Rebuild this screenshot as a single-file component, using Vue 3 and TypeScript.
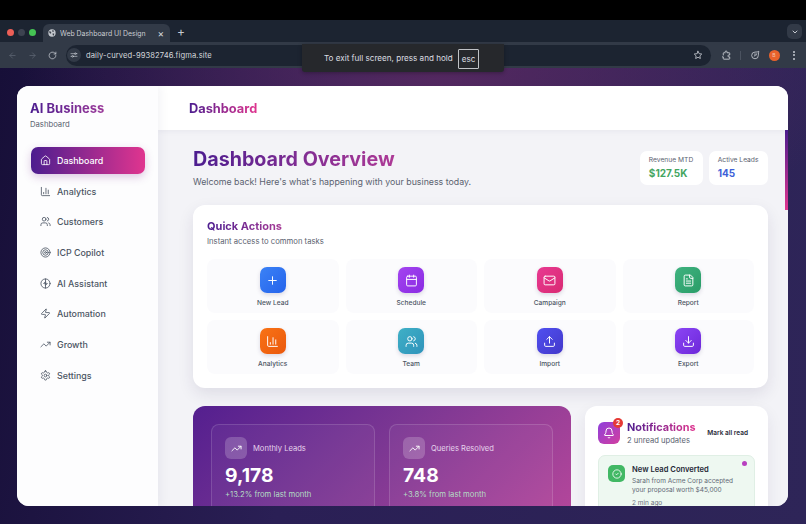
<template>
  <div class="screen">
    <div class="topblack"></div>

    <div class="tabstrip">
      <div class="lights">
        <span class="light red"></span>
        <span class="light grey"></span>
        <span class="light green"></span>
      </div>
      <div class="tab">
        <svg class="globe" viewBox="0 0 24 24"><circle cx="12" cy="12" r="11" fill="#c4c8ce" /><path d="M4 6l5 2 1 4-3 2-3-3zM13 3l5 2-2 4-3-1zM14 13l5 1-2 6-3-2z" fill="#3a404b" /></svg>
        <span class="tab-title">Web Dashboard UI Design</span>
        <span class="tab-close">×</span>
      </div>
      <span class="tab-plus">+</span>
      <span class="spacer"></span>
      <div class="tab-menu">
        <svg viewBox="0 0 24 24" class="ic"><path d="m6 9 6 6 6-6" /></svg>
      </div>
    </div>

    <div class="toolbar">
      <svg viewBox="0 0 24 24" class="ic tool dim"><path d="M19 12H5M12 19l-7-7 7-7" /></svg>
      <svg viewBox="0 0 24 24" class="ic tool dim"><path d="M5 12h14M12 5l7 7-7 7" /></svg>
      <svg viewBox="0 0 24 24" class="ic tool"><path d="M21 12a9 9 0 1 1-3-6.7L21 8" /><path d="M21 3v5h-5" /></svg>
      <div class="omnibox">
        <span class="site-btn">
          <svg viewBox="0 0 24 24" class="ic"><path d="M3 8h10M19 8h2M3 16h2M11 16h10" /><circle cx="16" cy="8" r="2.5" /><circle cx="8" cy="16" r="2.5" /></svg>
        </span>
        <span class="url">daily-curved-99382746.figma.site</span>
        <span class="spacer"></span>
        <svg viewBox="0 0 24 24" class="ic star"><path d="m12 3 2.8 5.8 6.2.9-4.5 4.4 1.1 6.3-5.6-3-5.6 3 1.1-6.3L3 9.7l6.2-.9z" /></svg>
      </div>
      <svg viewBox="0 0 24 24" class="ic ext"><path d="M9 4a2 2 0 0 1 4 0v2h5a1 1 0 0 1 1 1v4h-2a2 2 0 0 0 0 4h2v4a1 1 0 0 1-1 1H6a1 1 0 0 1-1-1v-4H3" /><path d="M5 11V7a1 1 0 0 1 1-1h3" /></svg>
      <span class="tool-sep"></span>
      <svg viewBox="0 0 24 24" class="ic ext2"><path d="M21 4c0 0-1 1-9 1a8 8 0 1 0 8 8c0-4 1-9 1-9z" /><path d="M12 9v4l-2 2M16 9l-2 4" /></svg>
      <span class="avatar">B</span>
      <span class="kebab"><i></i><i></i><i></i></span>
    </div>

    <div class="fs-toast">
      To exit full screen, press and hold <span class="esc">esc</span>
    </div>

    <div class="stage">
      <div class="window">
        <aside class="sidebar">
          <div class="brand">
            <div class="brand-name grad">AI Business</div>
            <div class="brand-sub">Dashboard</div>
          </div>
          <nav class="nav">
            <a v-for="item in navItems" :key="item.label" class="nav-item" :class="{ active: item.active }">
              <svg viewBox="0 0 24 24" class="ic nav-ic" v-html="item.icon"></svg>
              <span>{{ item.label }}</span>
            </a>
          </nav>
        </aside>

        <div class="main">
          <header class="header">
            <span class="header-title grad">Dashboard</span>
          </header>

          <div class="content">
            <div class="scrollthumb"></div>

            <section class="overview">
              <div>
                <h1 class="grad">Dashboard Overview</h1>
                <p>Welcome back! Here's what's happening with your business today.</p>
              </div>
              <div class="mini-stats">
                <div class="mini">
                  <div class="mini-label">Revenue MTD</div>
                  <div class="mini-value money">$127.5K</div>
                </div>
                <div class="mini">
                  <div class="mini-label">Active Leads</div>
                  <div class="mini-value leads">145</div>
                </div>
              </div>
            </section>

            <section class="quick">
              <h2 class="grad">Quick Actions</h2>
              <p class="quick-sub">Instant access to common tasks</p>
              <div class="quick-grid">
                <div v-for="a in actions" :key="a.label" class="action">
                  <span class="action-ic" :style="{ background: a.bg }">
                    <svg viewBox="0 0 24 24" class="ic" v-html="a.icon"></svg>
                  </span>
                  <span class="action-label">{{ a.label }}</span>
                </div>
              </div>
            </section>

            <section class="bottom">
              <div class="metrics">
                <div v-for="m in metrics" :key="m.label" class="metric">
                  <div class="metric-head">
                    <span class="metric-ic">
                      <svg viewBox="0 0 24 24" class="ic" v-html="trendIcon"></svg>
                    </span>
                    <span class="metric-label">{{ m.label }}</span>
                  </div>
                  <div class="metric-value">{{ m.value }}</div>
                  <div class="metric-delta">{{ m.delta }}</div>
                </div>
              </div>

              <div class="notifs">
                <div class="notifs-head">
                  <span class="bell">
                    <svg viewBox="0 0 24 24" class="ic"><path d="M10.3 21a1.9 1.9 0 0 0 3.4 0" /><path d="M3.3 15.3A1 1 0 0 0 4 17h16a1 1 0 0 0 .7-1.7C19.4 14 18 12.5 18 8A6 6 0 0 0 6 8c0 4.5-1.4 6-2.7 7.3" /></svg>
                    <span class="bell-badge">2</span>
                  </span>
                  <div class="notifs-titles">
                    <div class="notifs-title grad">Notifications</div>
                    <div class="notifs-sub">2 unread updates</div>
                  </div>
                  <span class="mark">Mark all read</span>
                </div>
                <div class="notif">
                  <span class="notif-ic">
                    <svg viewBox="0 0 24 24" class="ic"><circle cx="12" cy="12" r="10" /><path d="m9 12 2 2 4-4" /></svg>
                  </span>
                  <div class="notif-body">
                    <div class="notif-title">New Lead Converted</div>
                    <div class="notif-text">Sarah from Acme Corp accepted your proposal worth $45,000</div>
                    <div class="notif-time">2 min ago</div>
                  </div>
                  <span class="notif-dot"></span>
                </div>
              </div>
            </section>
          </div>
        </div>
      </div>
    </div>
  </div>
</template>

<script setup lang="ts">
interface NavItem {
  label: string
  icon: string
  active?: boolean
}

interface Action {
  label: string
  bg: string
  icon: string
}

const trendIcon = '<path d="M22 7 13.5 15.5 8.5 10.5 2 17" /><path d="M16 7h6v6" />'

const barsIcon = '<path d="M3 3v16a2 2 0 0 0 2 2h16" /><path d="M18 17V9" /><path d="M13 17V5" /><path d="M8 17v-3" />'
const usersIcon = '<path d="M16 21v-2a4 4 0 0 0-4-4H6a4 4 0 0 0-4 4v2" /><circle cx="9" cy="7" r="4" /><path d="M22 21v-2a4 4 0 0 0-3-3.87" /><path d="M16 3.13a4 4 0 0 1 0 7.75" />'

const navItems: NavItem[] = [
  {
    label: 'Dashboard',
    active: true,
    icon: '<path d="M15 21v-8a1 1 0 0 0-1-1h-4a1 1 0 0 0-1 1v8" /><path d="M3 10a2 2 0 0 1 .709-1.528l7-5.999a2 2 0 0 1 2.582 0l7 5.999A2 2 0 0 1 21 10v9a2 2 0 0 1-2 2H5a2 2 0 0 1-2-2z" />',
  },
  { label: 'Analytics', icon: barsIcon },
  { label: 'Customers', icon: usersIcon },
  {
    label: 'ICP Copilot',
    icon: '<circle cx="12" cy="12" r="10" /><circle cx="12" cy="12" r="6" /><circle cx="12" cy="12" r="2" />',
  },
  {
    label: 'AI Assistant',
    icon: '<circle cx="12" cy="12" r="10" /><path d="M12 2v20" /><path d="M12 8 8 12l4 1" /><path d="m12 11 4 1-4 4" />',
  },
  {
    label: 'Automation',
    icon: '<path d="M4 14a1 1 0 0 1-.78-1.63l9.9-10.2a.5.5 0 0 1 .86.46l-1.92 6.02A1 1 0 0 0 13 10h7a1 1 0 0 1 .78 1.63l-9.9 10.2a.5.5 0 0 1-.86-.46l1.92-6.02A1 1 0 0 0 11 14z" />',
  },
  { label: 'Growth', icon: trendIcon },
  {
    label: 'Settings',
    icon: '<path d="M12.22 2h-.44a2 2 0 0 0-2 2v.18a2 2 0 0 1-1 1.73l-.43.25a2 2 0 0 1-2 0l-.15-.08a2 2 0 0 0-2.73.73l-.22.38a2 2 0 0 0 .73 2.73l.15.1a2 2 0 0 1 1 1.72v.51a2 2 0 0 1-1 1.74l-.15.09a2 2 0 0 0-.73 2.73l.22.38a2 2 0 0 0 2.73.73l.15-.08a2 2 0 0 1 2 0l.43.25a2 2 0 0 1 1 1.73V20a2 2 0 0 0 2 2h.44a2 2 0 0 0 2-2v-.18a2 2 0 0 1 1-1.73l.43-.25a2 2 0 0 1 2 0l.15.08a2 2 0 0 0 2.73-.73l.22-.39a2 2 0 0 0-.73-2.73l-.15-.08a2 2 0 0 1-1-1.74v-.5a2 2 0 0 1 1-1.74l.15-.09a2 2 0 0 0 .73-2.73l-.22-.38a2 2 0 0 0-2.73-.73l-.15.08a2 2 0 0 1-2 0l-.43-.25a2 2 0 0 1-1-1.73V4a2 2 0 0 0-2-2z" /><circle cx="12" cy="12" r="3" />',
  },
]

const actions: Action[] = [
  {
    label: 'New Lead',
    bg: 'linear-gradient(135deg, #3b82f6, #2563eb)',
    icon: '<path d="M5 12h14" /><path d="M12 5v14" />',
  },
  {
    label: 'Schedule',
    bg: 'linear-gradient(135deg, #a344f0, #8a2be2)',
    icon: '<path d="M8 2v4" /><path d="M16 2v4" /><rect width="18" height="18" x="3" y="4" rx="2" /><path d="M3 10h18" />',
  },
  {
    label: 'Campaign',
    bg: 'linear-gradient(135deg, #e83a92, #d92a72)',
    icon: '<rect width="20" height="16" x="2" y="4" rx="2" /><path d="m22 7-8.97 5.7a1.94 1.94 0 0 1-2.06 0L2 7" />',
  },
  {
    label: 'Report',
    bg: 'linear-gradient(135deg, #3fb27f, #2a9d68)',
    icon: '<path d="M15 2H6a2 2 0 0 0-2 2v16a2 2 0 0 0 2 2h12a2 2 0 0 0 2-2V7Z" /><path d="M14 2v4a2 2 0 0 0 2 2h4" /><path d="M16 13H8" /><path d="M16 17H8" /><path d="M10 9H8" />',
  },
  {
    label: 'Analytics',
    bg: 'linear-gradient(135deg, #f97316, #ea580c)',
    icon: barsIcon,
  },
  {
    label: 'Team',
    bg: 'linear-gradient(135deg, #3fb0c6, #2f93bb)',
    icon: usersIcon,
  },
  {
    label: 'Import',
    bg: 'linear-gradient(135deg, #5050f0, #4338ca)',
    icon: '<path d="M12 3v12" /><path d="m17 8-5-5-5 5" /><path d="M21 15v4a2 2 0 0 1-2 2H5a2 2 0 0 1-2-2v-4" />',
  },
  {
    label: 'Export',
    bg: 'linear-gradient(135deg, #8b45f5, #6d28d9)',
    icon: '<path d="M12 15V3" /><path d="m7 10 5 5 5-5" /><path d="M21 15v4a2 2 0 0 1-2 2H5a2 2 0 0 1-2-2v-4" />',
  },
]

const metrics = [
  { label: 'Monthly Leads', value: '9,178', delta: '+13.2% from last month' },
  { label: 'Queries Resolved', value: '748', delta: '+3.8% from last month' },
]
</script>

<style>
html,
body {
  margin: 0;
  background: #000;
}
</style>

<style scoped>
* {
  box-sizing: border-box;
}

.screen {
  position: relative;
  width: 806px;
  height: 524px;
  display: flex;
  flex-direction: column;
  overflow: hidden;
  font-family: Inter, 'Liberation Sans', sans-serif;
  background: #000;
}

.ic {
  display: block;
  fill: none;
  stroke: currentColor;
  stroke-width: 2;
  stroke-linecap: round;
  stroke-linejoin: round;
}

.grad {
  display: inline-block;
  background: linear-gradient(90deg, #4c1d8f, #e0358f);
  -webkit-background-clip: text;
  background-clip: text;
  color: transparent;
}

.spacer {
  flex: 1;
}

.topblack {
  height: 20px;
  flex: none;
  background: #000;
}

.tabstrip {
  height: 22px;
  flex: none;
  display: flex;
  align-items: flex-end;
  background: #1c2431;
  color: #c6cad1;
}

.lights {
  display: flex;
  gap: 4px;
  padding: 0 7px 6px 7px;
}

.light {
  width: 7px;
  height: 7px;
  border-radius: 50%;
}

.light.red {
  background: #ec5f57;
}

.light.grey {
  background: #3d4350;
}

.light.green {
  background: #45c354;
}

.tab {
  width: 127px;
  height: 18px;
  display: flex;
  align-items: center;
  padding: 0 6px 0 5px;
  background: #323a47;
  border-radius: 6px 6px 0 0;
}

.globe {
  width: 8px;
  height: 8px;
  margin-right: 4px;
}

.tab-title {
  flex: 1;
  font-size: 6.9px;
  color: #c9ccd2;
  white-space: nowrap;
}

.tab-close {
  font-size: 10px;
  line-height: 1;
  color: #d8dade;
}

.tab-plus {
  width: 22px;
  height: 19px;
  text-align: center;
  font-size: 12px;
  line-height: 18px;
  color: #c6cad1;
}

.tab-menu {
  width: 15px;
  height: 15px;
  margin: 0 4px 3px 0;
  border-radius: 5px;
  background: #323a47;
  display: flex;
  align-items: center;
  justify-content: center;
}

.tab-menu .ic {
  width: 8px;
  height: 8px;
  stroke-width: 3;
}

.toolbar {
  height: 26px;
  flex: none;
  display: flex;
  align-items: center;
  padding: 0 11px 0 8px;
  background: #323a47;
  color: #c6cad1;
}

.tool {
  width: 9px;
  height: 9px;
  flex: none;
  margin-right: 11px;
}

.tool.dim {
  color: #5d6573;
}

.omnibox {
  flex: 1;
  height: 21px;
  margin-left: -2px;
  display: flex;
  align-items: center;
  padding: 0 8px 0 1px;
  background: #1c2431;
  border-radius: 11px;
}

.site-btn {
  width: 14px;
  height: 14px;
  border-radius: 50%;
  background: #323a47;
  display: flex;
  align-items: center;
  justify-content: center;
}

.site-btn .ic {
  width: 8px;
  height: 8px;
}

.url {
  margin-left: 5px;
  font-size: 7.6px;
  color: #d4d7dc;
  letter-spacing: 0.1px;
}

.star {
  width: 10px;
  height: 10px;
}

.ext {
  width: 11px;
  height: 11px;
  margin-left: 10px;
}

.tool-sep {
  width: 1px;
  height: 9px;
  margin-left: 8px;
  background: #4b5360;
}

.ext2 {
  width: 10px;
  height: 10px;
  margin-left: 9px;
}

.avatar {
  width: 11px;
  height: 11px;
  margin-left: 9px;
  border-radius: 50%;
  background: #e8622c;
  color: #f7c4ab;
  font-size: 5px;
  line-height: 11px;
  text-align: center;
}

.kebab {
  display: flex;
  flex-direction: column;
  gap: 1.5px;
  margin-left: 13.5px;
}

.kebab i {
  display: block;
  width: 2px;
  height: 2px;
  border-radius: 50%;
  background: #c6cad1;
}

.fs-toast {
  position: absolute;
  left: 302px;
  top: 44px;
  width: 202px;
  height: 28px;
  display: flex;
  align-items: center;
  padding-left: 22px;
  gap: 5px;
  background: #26282c;
  border-radius: 0 0 3px 3px;
  font-size: 8.1px;
  color: #dcdde0;
  box-shadow: 0 1px 4px rgba(0, 0, 0, 0.3);
}

.esc {
  display: inline-block;
  padding: 3px;
  margin-top: 1px;
  border: 1px solid #c0c2c6;
  border-radius: 1px;
  line-height: 12px;
}

.stage {
  flex: 1;
  min-height: 0;
  padding: 18px 18px 18px 17px;
  background:
    radial-gradient(ellipse 420px 190px at 440px 0, rgba(92, 42, 98, 0.85), rgba(92, 42, 98, 0) 100%),
    linear-gradient(100deg, #170f38 0%, #2a1f55 40%, #2e2558 100%);
}

.window {
  height: 100%;
  display: flex;
  background: #fff;
  border-radius: 12px;
  overflow: hidden;
}

.sidebar {
  width: 141px;
  flex: none;
  padding: 14px 13px 0 14px;
  background: #fdfdfe;
  box-shadow: 2px 0 10px rgba(40, 30, 80, 0.06);
  position: relative;
  z-index: 2;
}

.brand {
  height: 47px;
}

.brand-name {
  display: block;
  width: max-content;
  margin-left: -1px;
  font-size: 13px;
  font-weight: 700;
  line-height: 17px;
  background-image: linear-gradient(90deg, #4c1d8f, #9b3a9a);
}

.brand-sub {
  margin: 2px 0 0 -1px;
  font-size: 7.7px;
  line-height: 11px;
  color: #5b6270;
}

.nav {
  display: flex;
  flex-direction: column;
  gap: 4px;
}

.nav-item {
  height: 26.7px;
  display: flex;
  align-items: center;
  gap: 6px;
  padding-left: 9px;
  border-radius: 7px;
  font-size: 8.9px;
  font-weight: 500;
  color: #4b5563;
}

.nav-item.active {
  color: #fff;
  background: linear-gradient(90deg, #4c1d8f, #e0358f);
  box-shadow: 0 3px 8px rgba(120, 40, 140, 0.25);
}

.nav-ic {
  width: 11px;
  height: 11px;
  flex: none;
  stroke-width: 1.8;
}

.main {
  flex: 1;
  min-width: 0;
  display: flex;
  flex-direction: column;
}

.header {
  height: 44px;
  flex: none;
  display: flex;
  align-items: center;
  padding: 1px 0 0 31px;
  background: #fff;
  box-shadow: 0 1px 6px rgba(40, 30, 80, 0.06);
  position: relative;
  z-index: 1;
}

.header-title {
  font-size: 12.8px;
  font-weight: 700;
  line-height: 18px;
}

.content {
  position: relative;
  flex: 1;
  min-height: 0;
  overflow: hidden;
  padding: 16px 20px 0 35px;
  background: #f3f3f7;
}

.scrollthumb {
  position: absolute;
  right: 0;
  top: 0;
  width: 3px;
  height: 80px;
  background: linear-gradient(180deg, #4c1d8f, #e0358f);
}

.overview {
  display: flex;
  justify-content: space-between;
  height: 59px;
}

.overview h1 {
  margin: 0;
  font-size: 19.7px;
  font-weight: 700;
  line-height: 26px;
  background-image: linear-gradient(90deg, #4c1d8f, #ad3a96);
}

.overview p {
  margin: 3px 0 0;
  font-size: 8.8px;
  line-height: 14px;
  color: #5b6270;
}

.mini-stats {
  display: flex;
  gap: 6px;
  margin-top: 5px;
}

.mini {
  height: 34px;
  padding: 5px 9.5px 0 9px;
  background: #fff;
  border-radius: 7px;
}

.mini-label {
  font-size: 6.7px;
  line-height: 9px;
  color: #5b6270;
}

.mini-value {
  margin-top: 2px;
  font-size: 10px;
  font-weight: 700;
  line-height: 13px;
}

.money {
  color: #43a55f;
}

.leads {
  color: #3d5fd8;
}

.quick {
  height: 183px;
  padding: 9px 14px 0;
  background: #fff;
  border-radius: 12px;
  box-shadow: 0 6px 16px rgba(40, 30, 80, 0.1);
}

.quick h2 {
  margin: 0;
  font-size: 11px;
  font-weight: 700;
  line-height: 15px;
  background-image: linear-gradient(90deg, #4c1d8f, #a63a96);
}

.quick-sub {
  margin: 2px 0 0;
  font-size: 7.7px;
  line-height: 11px;
  color: #5b6270;
}

.quick-grid {
  margin-top: 12px;
  display: grid;
  grid-template-columns: repeat(4, 1fr);
  grid-auto-rows: 54px;
  gap: 7px;
}

.action {
  display: flex;
  flex-direction: column;
  align-items: center;
  padding-top: 8px;
  background: #fbfbfd;
  border-radius: 8px;
}

.action-ic {
  width: 26px;
  height: 26px;
  border-radius: 7px;
  display: flex;
  align-items: center;
  justify-content: center;
  color: #fff;
  box-shadow: 0 2px 4px rgba(40, 30, 80, 0.15);
}

.action-ic .ic {
  width: 13px;
  height: 13px;
  stroke-width: 1.8;
}

.action-label {
  margin-top: 6px;
  font-size: 6.6px;
  font-weight: 500;
  line-height: 9px;
  color: #4b5563;
}

.bottom {
  margin-top: 18px;
  display: flex;
  gap: 14px;
  height: 200px;
}

.metrics {
  width: 378px;
  flex: none;
  display: flex;
  gap: 14px;
  padding: 18px;
  background: linear-gradient(135deg, #541f8f 0%, #7c3793 40%, #b5479b 85%);
  border-radius: 12px;
}

.metric {
  flex: 1;
  padding: 12px 13px;
  background: rgba(255, 255, 255, 0.04);
  border: 1px solid rgba(255, 255, 255, 0.14);
  border-radius: 8px;
}

.metric-head {
  display: flex;
  align-items: center;
  gap: 6px;
}

.metric-ic {
  width: 22px;
  height: 22px;
  border-radius: 6px;
  display: flex;
  align-items: center;
  justify-content: center;
  background: rgba(255, 255, 255, 0.2);
  color: #fff;
}

.metric-ic .ic {
  width: 11px;
  height: 11px;
}

.metric-label {
  font-size: 7.6px;
  color: #e6d3ec;
}

.metric-value {
  margin-top: 4px;
  font-size: 19.3px;
  font-weight: 700;
  line-height: 25px;
  color: #fff;
}

.metric-delta {
  margin-top: 1px;
  font-size: 7.7px;
  line-height: 11px;
  color: #b4dcc4;
}

.notifs {
  width: 183px;
  flex: none;
  padding: 12px 13px 0;
  background: #fff;
  border-radius: 12px;
  box-shadow: 0 6px 16px rgba(40, 30, 80, 0.08);
}

.notifs-head {
  display: flex;
  align-items: center;
  gap: 7px;
  height: 30px;
}

.bell {
  position: relative;
  width: 22px;
  height: 22px;
  flex: none;
  border-radius: 6px;
  display: flex;
  align-items: center;
  justify-content: center;
  background: linear-gradient(135deg, #8f3fdc, #d23f9f);
  color: #fff;
}

.bell .ic {
  width: 12px;
  height: 12px;
}

.bell-badge {
  position: absolute;
  top: -4px;
  right: -3px;
  width: 10px;
  height: 10px;
  border-radius: 50%;
  background: #e53935;
  font-size: 6.5px;
  font-weight: 700;
  line-height: 10px;
  text-align: center;
}

.notifs-titles {
  flex: 1;
}

.notifs-title {
  display: block;
  width: max-content;
  font-size: 10.9px;
  font-weight: 700;
  line-height: 14px;
}

.notifs-sub {
  margin-top: 1px;
  font-size: 7.6px;
  line-height: 11px;
  color: #5b6270;
}

.mark {
  font-size: 6.5px;
  font-weight: 600;
  color: #1f2937;
  white-space: nowrap;
  margin-right: 7px;
}

.notif {
  position: relative;
  display: flex;
  gap: 7px;
  margin-top: 7px;
  height: 90px;
  padding: 9px;
  background: #eef8f1;
  border: 1px solid #e0efe5;
  border-radius: 7px;
}

.notif-ic {
  width: 17px;
  height: 17px;
  flex: none;
  border-radius: 5px;
  display: flex;
  align-items: center;
  justify-content: center;
  background: #41b864;
  color: #fff;
}

.notif-ic .ic {
  width: 10px;
  height: 10px;
}

.notif-title {
  font-size: 7.6px;
  font-weight: 600;
  line-height: 10px;
  color: #1f2937;
}

.notif-text {
  margin-top: 2px;
  font-size: 6.5px;
  line-height: 9px;
  color: #5f6875;
}

.notif-time {
  margin-top: 4px;
  font-size: 6.5px;
  line-height: 9px;
  color: #6b7280;
}

.notif-dot {
  position: absolute;
  right: 7px;
  top: 5px;
  width: 5px;
  height: 5px;
  border-radius: 50%;
  background: #b840c0;
}
</style>
